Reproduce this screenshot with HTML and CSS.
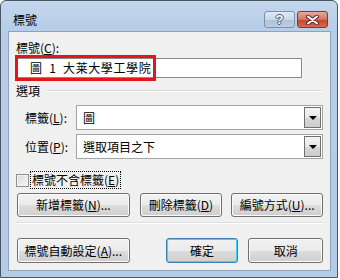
FILE: index.html
```html
<!DOCTYPE html>
<html lang="zh-Hant">
  <head>
    <meta charset="UTF-8" />
    <title>標號</title>
    <link rel="stylesheet" href="styles.css">
  </head>
  <body>
    <div class="window">
      <div class="titlebar">
        <span class="title">標號</span>
        <div class="caption-buttons">
          <div class="cap help">?</div>
          <div class="cap close">
            <svg width="13" height="10" viewBox="0 0 13 10">
              <path d="M2 1.5 L11 8.5 M11 1.5 L2 8.5" stroke="#5a2a24" stroke-width="4" stroke-linecap="round" fill="none"/>
              <path d="M2 1.5 L11 8.5 M11 1.5 L2 8.5" stroke="#ffffff" stroke-width="2" stroke-linecap="round" fill="none"/>
            </svg>
          </div>
        </div>
      </div>

      <div class="client">
        <div class="field-label">標號(<u>C</u>):</div>
        <div class="caption-input">
          <span class="caption-text">圖&ensp;1&ensp;大莱大學工學院</span>
          <div class="highlight"></div>
        </div>

        <div class="group-head">
          <span>選項</span>
          <div class="group-line"></div>
        </div>

        <div class="opt-row">
          <span class="opt-label">標籤(<u>L</u>):</span>
          <div class="combo">
            <span class="combo-text">圖</span>
            <span class="drop"><span class="arrow"></span></span>
          </div>
        </div>
        <div class="opt-row second">
          <span class="opt-label">位置(<u>P</u>):</span>
          <div class="combo">
            <span class="combo-text">選取項目之下</span>
            <span class="drop"><span class="arrow"></span></span>
          </div>
        </div>

        <div class="check-row">
          <span class="checkbox"></span>
          <span class="check-label">標號不含標籤(<u>E</u>)</span>
        </div>

        <div class="btn-row">
          <div class="btn w-new">新增標籤(<u>N</u>)...</div>
          <div class="btn w-del">刪除標籤(<u>D</u>)</div>
          <div class="btn w-num">編號方式(<u>U</u>)...</div>
        </div>

        <div class="separator"></div>

        <div class="btn-row bottom">
          <div class="btn w-new">標號自動設定(<u>A</u>)...</div>
          <div class="btn default w-ok">確定</div>
          <div class="btn w-cancel">取消</div>
        </div>
      </div>
    </div>
  </body>
</html>
```

FILE: styles.css
```css
* {
  margin: 0;
  padding: 0;
  box-sizing: border-box;
}

body {
  background-color: #ffffff;
  font-family: "Noto Sans CJK TC", "Liberation Sans", sans-serif;
  font-size: 12px;
  color: #000000;
}

u {
  text-decoration: underline;
  text-underline-offset: 1px;
}

.window {
  width: 338px;
  height: 278px;
  border: 1px solid #4a5563;
  border-radius: 6px 6px 0 0;
  background: linear-gradient(to bottom, #c3d7ed 0, #b6cde8 30px, #b4cce8 100%);
  padding: 0 6px 6px 7px;
  display: flex;
  flex-direction: column;
}

/* title bar */

.titlebar {
  height: 30px;
  display: flex;
  align-items: flex-start;
  margin: 0 -6px 0 -7px;
}

.title {
  margin: 11px 0 0 12px;
  line-height: 16px;
  font-size: 12px;
}

.caption-buttons {
  margin: 10px 9px 0 auto;
  display: flex;
  gap: 2px;
}

.cap {
  width: 31px;
  height: 17px;
  border-radius: 3px;
  display: flex;
  align-items: center;
  justify-content: center;
}

.help {
  border: 1px solid #7d8fa6;
  background: linear-gradient(to bottom, #e1eaf5 0%, #c9d7e8 50%, #acc1d9 51%, #bccee3 100%);
  color: #ffffff;
  font-family: "Liberation Sans", sans-serif;
  font-weight: bold;
  font-size: 13px;
  line-height: 15px;
  text-shadow: 1px 0 0 #4b5a70, -1px 0 0 #4b5a70, 0 1px 0 #4b5a70, 0 -1px 0 #4b5a70;
}

.close {
  border: 1px solid #7e3a33;
  background: linear-gradient(to bottom, #e9a99c 0%, #d27462 50%, #c2422f 51%, #d8694f 100%);
}

/* client area */

.client {
  flex: 1;
  background-color: #f0f0f0;
  border: 1px solid #8ea3bb;
  padding: 0 7px;
  display: flex;
  flex-direction: column;
}

.field-label {
  margin-top: 8px;
  line-height: 16px;
}

.caption-input {
  position: relative;
  margin-top: 2px;
  width: 286px;
  height: 20px;
  background-color: #ffffff;
  border: 1px solid #8a8a8a;
  display: flex;
  align-items: center;
  padding-left: 13px;
}

.caption-text {
  line-height: 16px;
  letter-spacing: 0.6px;
}

.highlight {
  position: absolute;
  left: -2px;
  top: -4px;
  width: 141px;
  height: 26px;
  border: 3px solid #e8141b;
}

.group-head {
  margin-top: 5px;
  display: flex;
  align-items: center;
  line-height: 16px;
}

.group-line {
  flex: 1;
  margin-left: 6px;
  height: 2px;
  border-top: 1px solid #d5dfe5;
  border-bottom: 1px solid #ffffff;
}

.opt-row {
  margin-top: 6px;
  display: flex;
  align-items: center;
  padding-left: 9px;
}

.opt-row.second {
  margin-top: 4px;
}

.opt-label {
  width: 51px;
  line-height: 16px;
}

.combo {
  flex: 1;
  height: 25px;
  background-color: #ffffff;
  border: 1px solid #a3a3a3;
  display: flex;
  align-items: center;
  padding: 1px;
}

.combo-text {
  flex: 1;
  padding-left: 5px;
  line-height: 16px;
}

.drop {
  width: 17px;
  height: 100%;
  border: 1px solid #707070;
  background: linear-gradient(to bottom, #f4f4f4 0%, #e6e6e6 50%, #d6d6d6 51%, #cdcdcd 100%);
  display: flex;
  align-items: center;
  justify-content: center;
}

.arrow {
  width: 0;
  height: 0;
  border-left: 4px solid transparent;
  border-right: 4px solid transparent;
  border-top: 4px solid #000000;
}

.check-row {
  margin-top: 12px;
  height: 18px;
  display: flex;
  align-items: center;
}

.checkbox {
  width: 13px;
  height: 13px;
  border: 1px solid #8e8f8f;
  background: linear-gradient(135deg, #dcdcdc 0%, #f6f6f6 100%);
  box-shadow: inset 0 0 0 1px #f4f4f4;
}

.check-label {
  margin-left: 1px;
  border: 1px dotted #000000;
  padding: 0 1px;
  line-height: 16px;
}

.btn-row {
  margin-top: 4px;
  display: flex;
  padding-left: 1px;
}

.btn-row.bottom {
  margin-top: 14px;
}

.btn {
  height: 24px;
  border: 1px solid #707070;
  border-radius: 3px;
  background: linear-gradient(to bottom, #f2f2f2 0%, #ebebeb 50%, #dddddd 51%, #cfcfcf 100%);
  box-shadow: inset 0 0 0 1px #fbfbfb;
  display: flex;
  align-items: center;
  justify-content: center;
  line-height: 16px;
}

.btn.default {
  border-color: #3c7fb1;
  box-shadow: inset 0 0 0 1px #48d0f6;
}

.w-new { width: 113px; }
.w-del { width: 83px; margin-left: 10px; }
.w-num { width: 92px; margin-left: 9px; }
.w-ok { width: 73px; margin-left: 36px; }
.w-cancel { width: 75px; margin-left: 10px; }

.bottom .btn {
  height: 25px;
}

.separator {
  margin-top: 5px;
  height: 2px;
  border-top: 1px solid #d5dfe5;
  border-bottom: 1px solid #ffffff;
}
```
